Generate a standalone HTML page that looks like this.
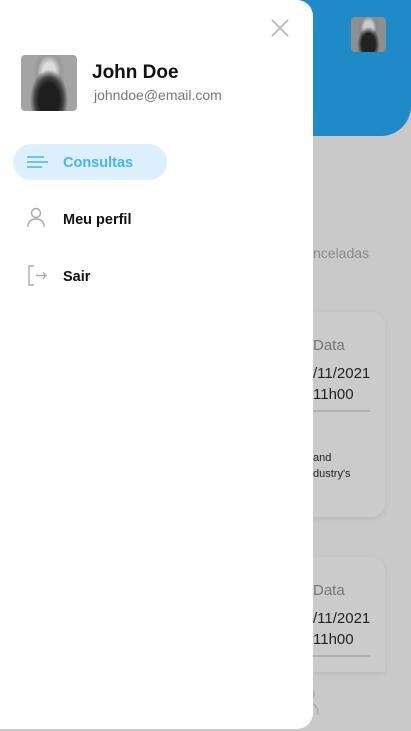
<!DOCTYPE html>
<html><head><meta charset="utf-8"><style>
*{margin:0;padding:0;box-sizing:border-box}
body{width:411px;height:731px;overflow:hidden;background:#c9c9c9;position:relative;font-family:"Liberation Sans",sans-serif}
.hdr{position:absolute;left:0;top:0;width:411px;height:136px;background:#1e8ac8;border-bottom-right-radius:30px}
.av2{position:absolute;left:351px;top:17px;width:35px;height:35px;border-radius:4px;background:radial-gradient(ellipse at 50% 78%,#222 0 28%,transparent 45%),radial-gradient(ellipse at 50% 30%,#ccc 0 18%,#888 32%,transparent 45%),#8f8f8f;overflow:hidden}
.card{position:absolute;left:290px;width:95px;background:#cbcbcb;border-radius:14px;box-shadow:0 2px 6px rgba(0,0,0,.08)}
.t{position:absolute;left:313px;font-size:15px;color:#222}
.drawer{position:absolute;left:0;top:0;width:313px;height:729px;background:#fff;border-top-right-radius:16px;border-bottom-right-radius:16px}
.av{position:absolute;left:21px;top:55px;width:56px;height:56px;border-radius:4px;background:radial-gradient(ellipse at 50% 80%,#1e1e1e 0 26%,#444 36%,transparent 48%),radial-gradient(ellipse at 50% 30%,#ddd 0 16%,#999 30%,transparent 42%),#a4a4a4}
.name{position:absolute;left:92px;top:62px;font-size:19px;font-weight:bold;color:#111}
.mail{position:absolute;left:94px;top:87px;font-size:14px;color:#777}
.pill{position:absolute;left:13px;top:144px;width:154px;height:36px;border-radius:18px;background:#ddf0fd}
.item{position:absolute;left:63px;font-size:14.5px;font-weight:bold;color:#111}
</style></head><body>
<div class="hdr"></div>
<div class="av2"></div>
<div class="t" style="top:245px;color:#8a8a8a;font-size:14px">nceladas</div>
<div class="card" style="top:312px;height:205px"></div>
<div class="t" style="top:337px;color:#777">Data</div>
<div class="t" style="top:365px">/11/2021</div>
<div class="t" style="top:386px">11h00</div>
<div style="position:absolute;left:313px;top:410px;width:57px;height:2px;background:#b0b0b0"></div>
<div class="t" style="top:452px;font-size:11px">and</div>
<div class="t" style="top:468px;font-size:11px">dustry's</div>
<div class="card" style="top:557px;height:115px;border-bottom-left-radius:0;border-bottom-right-radius:0"></div>
<div class="t" style="top:582px;color:#777">Data</div>
<div class="t" style="top:610px">/11/2021</div>
<div class="t" style="top:631px">11h00</div>
<div style="position:absolute;left:313px;top:655px;width:57px;height:2px;background:#b0b0b0"></div>
<svg style="position:absolute;left:296px;top:686px" width="26" height="30"><circle cx="12" cy="8" r="6" fill="none" stroke="#aaa" stroke-width="1.4"/><path d="M2 29Q2 17 12 17Q22 17 22 29" fill="none" stroke="#aaa" stroke-width="1.4"/></svg>
<div class="drawer">
<svg style="position:absolute;left:270px;top:18px" width="20" height="20"><path d="M2 2L18 18M18 2L2 18" stroke="#b5b5b5" stroke-width="1.6"/></svg>
<div class="av"></div>
<div class="name">John Doe</div>
<div class="mail">johndoe@email.com</div>
<div class="pill"></div>
<svg style="position:absolute;left:26px;top:155px" width="24" height="14"><path d="M1 2H18M1 7H22M1 12H16" stroke="#45b3f5" stroke-width="1.5"/></svg>
<div class="item" style="top:155px;color:#45b3f5">Consultas</div>
<svg style="position:absolute;left:26px;top:207px" width="20" height="20"><circle cx="10" cy="6" r="4.5" fill="none" stroke="#aaa" stroke-width="1.4"/><path d="M2 20Q2 12 10 12Q18 12 18 20" fill="none" stroke="#aaa" stroke-width="1.4"/></svg>
<div class="item" style="top:212px">Meu perfil</div>
<svg style="position:absolute;left:27px;top:265px" width="22" height="22"><path d="M7 1H2V20H7" fill="none" stroke="#aaa" stroke-width="1.4"/><path d="M9 10.5H19M16 7.5L19 10.5L16 13.5" fill="none" stroke="#aaa" stroke-width="1.4"/></svg>
<div class="item" style="top:269px">Sair</div>
</div>
</body></html>
